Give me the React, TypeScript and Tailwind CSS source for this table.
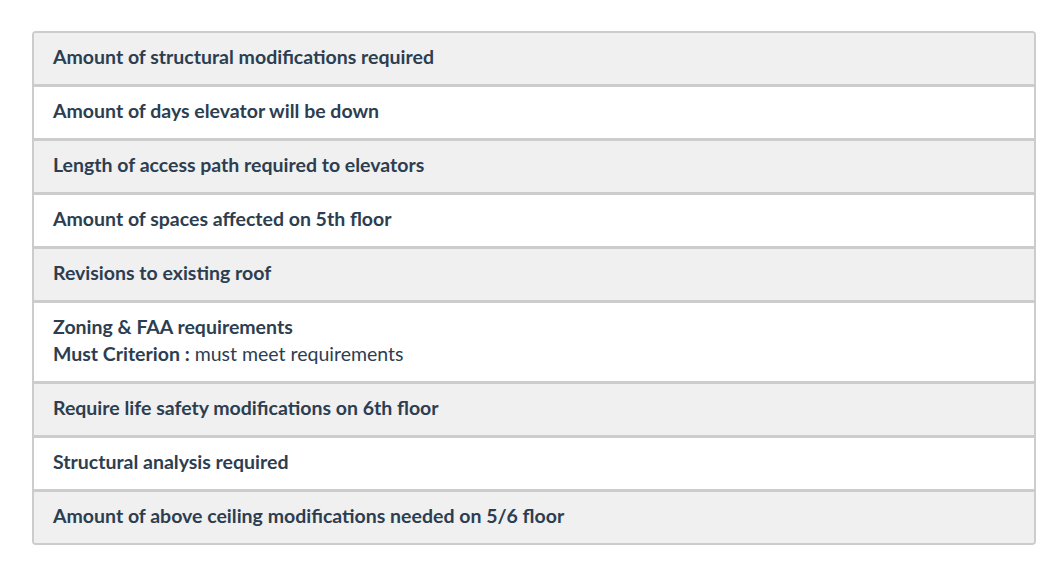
import React from "react";

const rows: { title: string; extra?: { label: string; value: string } }[] = [
  { title: "Amount of structural modifications required" },
  { title: "Amount of days elevator will be down" },
  { title: "Length of access path required to elevators" },
  { title: "Amount of spaces affected on 5th floor" },
  { title: "Revisions to existing roof" },
  { title: "Zoning & FAA requirements", extra: { label: "Must Criterion :", value: "must meet requirements" } },
  { title: "Require life safety modifications on 6th floor" },
  { title: "Structural analysis required" },
  { title: "Amount of above ceiling modifications needed on 5/6 floor" },
];

export default function App() {
  return (
    <div className="w-[1064px] h-[578px] bg-white pt-[31px] pl-[32px]" style={{ fontFamily: "Lato, 'Open Sans', sans-serif" }}>
      <div className="w-[1004px] border-2 border-[#cccccc] rounded-[4px] overflow-hidden">
        {rows.map((r, i) => (
          <div
            key={i}
            className={`px-[19px] pt-[10px] pb-[14px] text-[19.5px] leading-[27px] text-[#2c3e50] ${i % 2 === 0 ? "bg-[#f0f0f0]" : "bg-white"} ${i > 0 ? "border-t-[3px] border-[#cccccc]" : ""}`}
          >
            <div className="font-bold">{r.title}</div>
            {r.extra && (
              <div>
                <span className="font-bold">{r.extra.label}</span> {r.extra.value}
              </div>
            )}
          </div>
        ))}
      </div>
    </div>
  );
}
